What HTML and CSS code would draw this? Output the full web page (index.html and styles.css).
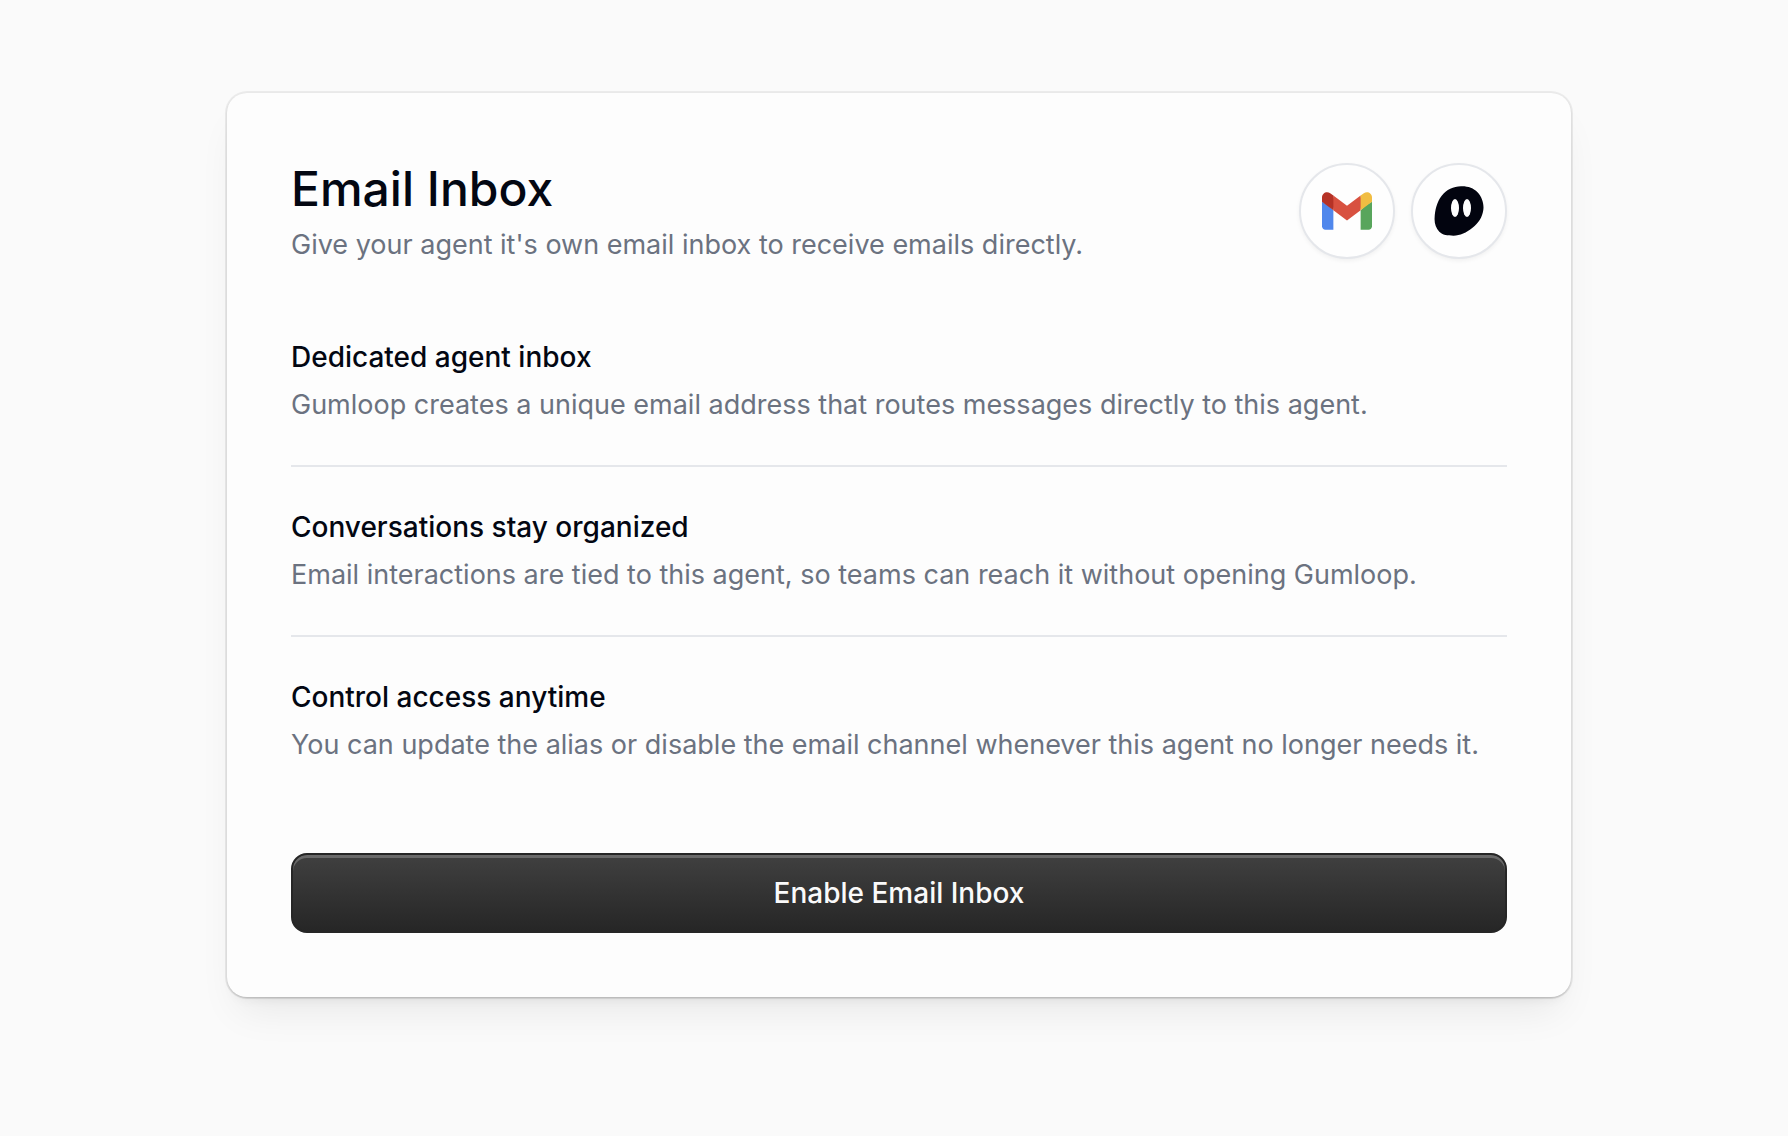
FILE: index.html
```html
<!DOCTYPE html>
<html lang="en">
<head>
    <meta charset="UTF-8">
    <meta name="viewport" content="width=device-width, initial-scale=1.0">
    <title>Email Inbox</title>
    <link rel="stylesheet" href="styles.css">
</head>
<body>
    <main class="card">
        <header class="card-header">
            <div class="card-heading">
                <h1>Email Inbox</h1>
                <p>Give your agent it's own email inbox to receive emails directly.</p>
            </div>
            <div class="logos">
                <span class="logo">
                    <svg width="50" height="38" viewBox="0 0 256 193" role="img" aria-label="Gmail">
                        <path fill="#5087ec" d="M58.182 192.05V93.14L27.507 65.077 0 49.504v125.091c0 9.658 7.825 17.455 17.455 17.455z"/>
                        <path fill="#58a55c" d="M197.818 192.05h40.727c9.659 0 17.455-7.826 17.455-17.455V49.505l-31.156 17.837-27.026 25.798z"/>
                        <path fill="#d85140" d="M58.182 93.14l-4.174-38.647 4.174-36.989L128 69.868l69.818-52.364 4.669 34.992-4.669 40.644L128 145.504z"/>
                        <path fill="#f1bd42" d="M197.818 17.504V93.14L256 49.504V26.231c0-21.585-24.64-33.89-41.89-20.945z"/>
                        <path fill="#b53226" d="M0 49.504l26.759 20.07L58.182 93.14V17.504L41.89 5.286C24.61-7.66 0 4.646 0 26.23z"/>
                    </svg>
                </span>
                <span class="logo">
                    <svg width="50" height="50" viewBox="0 0 50 50" role="img" aria-label="Gumloop">
                        <path fill="#02040f" d="M27 0.3C33.500 0 39.500 2 43.500 6.300C48 11 50.200 18 49.300 24C48.200 31.500 44.500 37 38.500 41.800C32.500 46.700 26 49.700 19.500 49.700C13.500 49.700 8.500 49 5.300 45.800C1.800 42.300 0.300 37.500 0.600 32C0.900 24 3 16 7.500 10C12.500 3.500 19.500 0.500 27 0.300Z"/>
                        <ellipse cx="21" cy="22" rx="4" ry="9" fill="#fefefe"/>
                        <ellipse cx="33" cy="22" rx="4" ry="9" fill="#fefefe"/>
                    </svg>
                </span>
            </div>
        </header>

        <div class="features">
            <section class="feature">
                <h2>Dedicated agent inbox</h2>
                <p>Gumloop creates a unique email address that routes messages directly to this agent.</p>
            </section>
            <section class="feature">
                <h2>Conversations stay organized</h2>
                <p>Email interactions are tied to this agent, so teams can reach it without opening Gumloop.</p>
            </section>
            <section class="feature">
                <h2>Control access anytime</h2>
                <p>You can update the alias or disable the email channel whenever this agent no longer needs it.</p>
            </section>
        </div>

        <button type="button" class="enable-button">Enable Email Inbox</button>
    </main>
</body>
</html>
```
FILE: styles.css
```css
* {
    box-sizing: border-box;
}
body {
    margin: 0;
    padding: 93px 64px 64px 74px;
    background-color: #fafafa;
    color: #030712;
    font-family: Inter, "Liberation Sans", sans-serif;
    font-size: 27px;
    line-height: 40px;
}
h1,
h2,
p {
    margin: 0;
}
h1 {
    font-size: 48px;
    line-height: 64px;
    font-weight: 500;
}
h2 {
    font-size: 28px;
    line-height: 40px;
    font-weight: 500;
}
p {
    color: #6b7280;
}
.card {
    display: flex;
    flex-direction: column;
    max-width: 1344px;
    margin: 0 auto;
    padding: 64px;
    background-color: #fdfdfd;
    border-radius: 20px;
    box-shadow: 0 0 0 2px rgba(0, 0, 0, 0.06), 0 1px 2px rgba(0, 0, 0, 0.16), 0 8px 12px -6px rgba(0, 0, 0, 0.06), 0 24px 40px -12px rgba(0, 0, 0, 0.08);
}
.card-header {
    display: flex;
    align-items: center;
    justify-content: space-between;
    gap: 16px;
}
.card-heading {
    display: flex;
    flex-direction: column;
    gap: 4px;
}
.logos {
    display: flex;
    gap: 16px;
}
.logo {
    display: flex;
    align-items: center;
    justify-content: center;
    width: 96px;
    height: 96px;
    border: 2px solid #e5e7eb;
    border-radius: 50%;
    background-color: #fefefe;
    box-shadow: 0 2px 4px rgba(0, 0, 0, 0.05);
}
.features {
    margin: 32px 0 48px;
}
.feature {
    display: flex;
    flex-direction: column;
    gap: 8px;
    padding: 40px 0;
}
.feature + .feature {
    border-top: 2px solid #e5e7eb;
}
.enable-button {
    height: 80px;
    border: 2px solid #262626;
    border-radius: 16px;
    background: linear-gradient(#404040, #262626);
    box-shadow: inset 0 3px 0 rgba(255, 255, 255, 0.22);
    color: #fafafa;
    font-family: inherit;
    font-size: 28px;
    font-weight: 500;
    cursor: pointer;
}
.enable-button:hover {
    background: linear-gradient(#4a4a4a, #303030);
}
```
